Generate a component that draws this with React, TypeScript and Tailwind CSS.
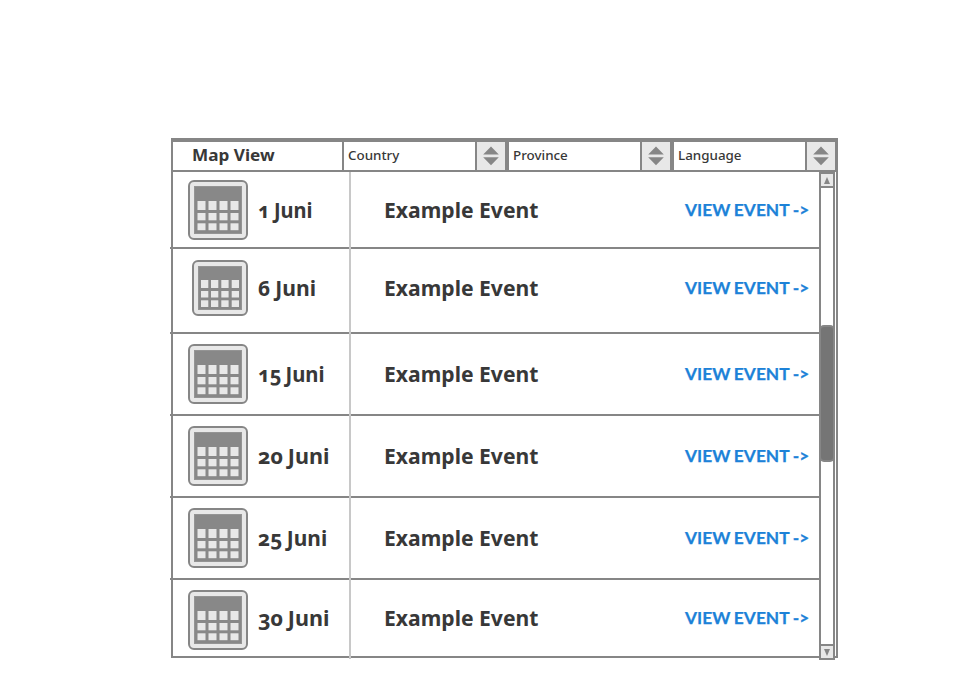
import React from "react";

type Row = {
  date: string;
  row: string;
  icon: string;
  label: string;
  dateText: string;
  small?: boolean;
};

const rows: Row[] = [
  { date: "1 Juni", row: "h-[77px]", icon: "pt-2", label: "pt-[23px]", dateText: "scale-x-[0.91] [word-spacing:-1px]" },
  { date: "6 Juni", row: "h-[85px]", icon: "pt-[11px]", label: "pt-[24px]", dateText: "scale-x-[0.96] [word-spacing:-0.5px]", small: true },
  { date: "15 Juni", row: "h-[82px]", icon: "pt-[10px]", label: "pt-[25px]", dateText: "scale-x-[0.92] [word-spacing:-1.5px]" },
  { date: "20 Juni", row: "h-[82px]", icon: "pt-[10px]", label: "pt-[25px]", dateText: "scale-x-[0.98] [word-spacing:-1px]" },
  { date: "25 Juni", row: "h-[82px]", icon: "pt-[10px]", label: "pt-[25px]", dateText: "scale-x-[0.95] [word-spacing:-1px]" },
  { date: "30 Juni", row: "h-[78px]", icon: "pt-[10px]", label: "pt-[23px]", dateText: "scale-x-[0.98] [word-spacing:-1px]" },
];

function CalendarIcon({ small }: { small?: boolean }) {
  const size = small ? 56 : 60;
  const xs = small ? [9, 19, 29.3, 39.7] : [9.5, 20.5, 31.5, 42.5];
  const ys = small ? [[20, 8], [31, 6.5], [40.3, 6.7]] : [[21, 9], [33, 7.3], [43.3, 6.9]];
  return (
    <svg width={size} height={size} viewBox={`0 0 ${size} ${size}`} className="block shrink-0">
      <rect x="1" y="1" width={size - 2} height={size - 2} rx="5" fill="#e8e8e8" stroke="#868686" strokeWidth="2" />
      <rect x="6" y="6" width={size - 12} height={size - 12} fill="#888888" />
      <rect x="6.5" y="6.5" width={size - 13} height={size - 13} fill="none" stroke="#949494" />
      {ys.map(([y, h]) =>
        xs.map((x) => <rect key={`${x}-${y}`} x={x} y={y} width={small ? 7.3 : 8} height={h} fill="#e8e8e8" />),
      )}
    </svg>
  );
}

function Select({ label, last }: { label: string; last?: boolean }) {
  return (
    <div className="flex h-full">
      <div className="w-[131px] pl-1 text-[13px] leading-[27px] font-medium">
        <span className="inline-block origin-left scale-x-[1.03] whitespace-nowrap">{label}</span>
      </div>
      <div
        className={`flex h-full items-center justify-center border-l-2 border-[#868686] bg-[#e8e8e8] ${
          last ? "w-[31px] border-r" : "w-[34px] border-r-4"
        }`}
      >
        <svg width="16" height="20" viewBox="0 0 16 20" fill="#868686">
          <path d="M8 .5 15.8 8.5H.2ZM.2 11.3H15.8L8 19.3Z" />
        </svg>
      </div>
    </div>
  );
}

function EventRow({ item, last }: { item: Row; last: boolean }) {
  return (
    <div className={`flex ${item.row} ${last ? "" : "-ml-[3px] border-b-2 border-[#868686] pl-[3px]"}`}>
      <div className={`w-[75px] shrink-0 ${item.icon} ${item.small ? "pl-[19px]" : "pl-[15px]"}`}>
        <CalendarIcon small={item.small} />
      </div>
      <div className={`flex w-[571px] shrink-0 leading-[30px] font-bold ${item.label}`}>
        <div className="-mt-px w-[136px] pl-[10px] text-[22px]">
          <span className={`inline-block origin-left whitespace-nowrap oldstyle-nums ${item.dateText}`}>{item.date}</span>
        </div>
        <div className="-mt-px w-[301px] text-[22px]">
          <span className="inline-block origin-left scale-x-[0.96] whitespace-nowrap">Example Event</span>
        </div>
        <a className="block font-[Lato,sans-serif] text-[17px] text-[#1c82d8] [-webkit-text-stroke:0.25px]">
          <span className="inline-block origin-left scale-x-[1.02] whitespace-nowrap [word-spacing:-0.6px]">VIEW EVENT -&gt;</span>
        </a>
      </div>
    </div>
  );
}

function Scrollbar() {
  return (
    <div className="flex h-[488px] w-4 shrink-0 flex-col border-2 border-[#868686] bg-white">
      <div className="flex h-[14px] items-center justify-center border-b-2 border-[#868686] bg-[#e8e8e8]">
        <svg width="6" height="7" viewBox="0 0 6 7"><path d="M3 0 6 7H0Z" fill="#868686" /></svg>
      </div>
      <div className="flex-1 pt-[137px]">
        <div className="-ml-[2px] h-[137px] w-[15.5px] rounded-[5px] border-2 border-[#868686] bg-[#757575]" />
      </div>
      <div className="flex h-[14px] items-center justify-center border-t-2 border-[#868686] bg-[#e8e8e8]">
        <svg width="6" height="7" viewBox="0 0 6 7"><path d="M0 0H6L3 7Z" fill="#868686" /></svg>
      </div>
    </div>
  );
}

export default function App() {
  return (
    <main className="h-[680px] w-[960px] overflow-hidden bg-white pt-[138px] pl-[171px] font-['Noto_Sans',sans-serif] text-[#383838]">
      <section className="relative h-[520px] w-[667px] border-2 border-t-4 border-[#868686]">
        <header className="flex h-[30px] border-b-2 border-[#868686]">
          <div className="w-[171px] border-r-2 border-[#868686] pl-[19px] text-[16.5px] leading-[25px] font-bold">
            <span className="inline-block origin-left scale-x-[1.04] whitespace-nowrap">Map View</span>
          </div>
          <Select label="Country" />
          <Select label="Province" />
          <Select label="Language" last />
        </header>
        <div className="flex h-[484px]">
          <div className="w-[646px] shrink-0">
            {rows.map((item, i) => (
              <EventRow key={item.date} item={item} last={i === rows.length - 1} />
            ))}
          </div>
          <Scrollbar />
        </div>
        <div className="absolute top-[30px] left-[176px] h-[487px] w-[2px] bg-[#c8c8c8]" />
      </section>
    </main>
  );
}
